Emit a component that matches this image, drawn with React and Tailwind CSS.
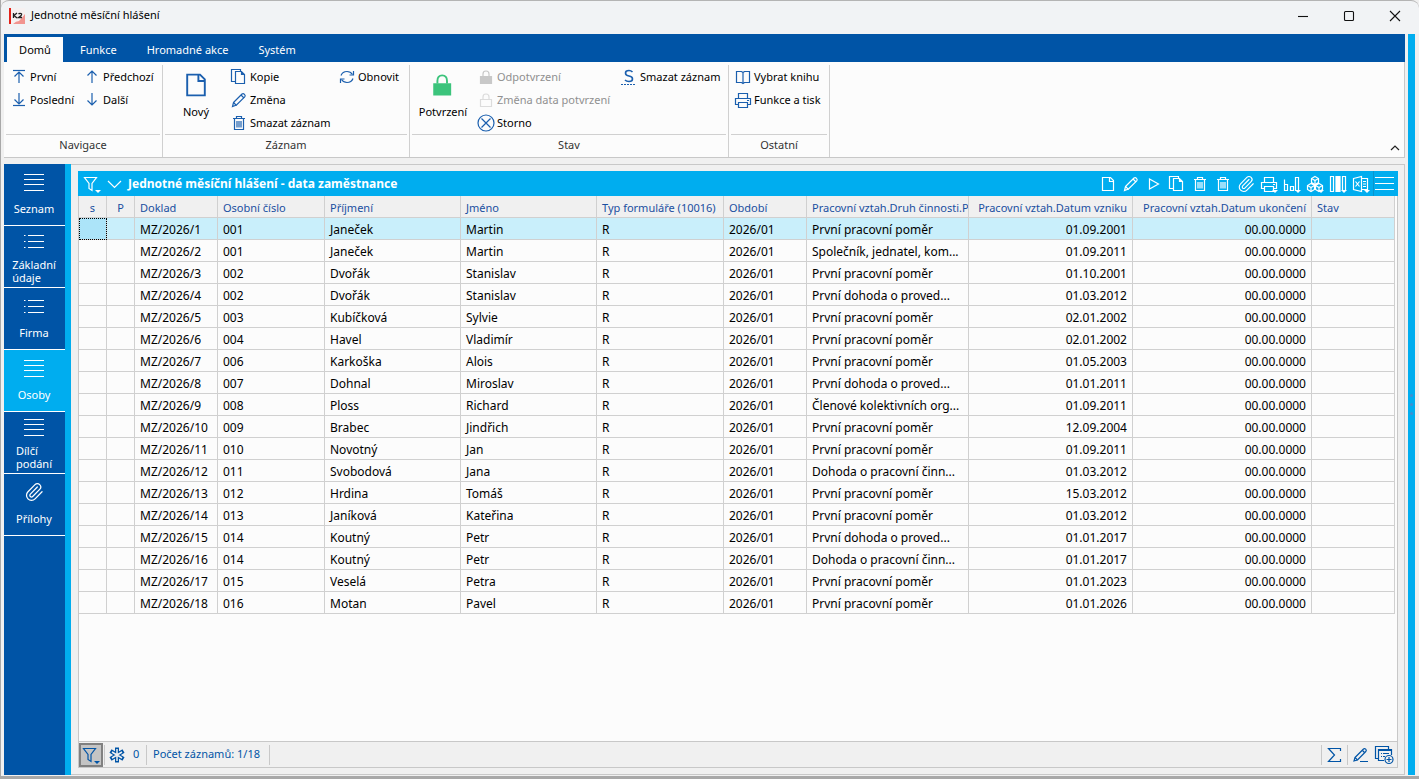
import { useState } from 'react';
import { Paperclip } from 'lucide-react';

const icons = {
  first: (
    <>
      <path d="M4 3.500h12" />
      <path d="M10 16V5M5.500 9.500L10 5l4.500 4.500" />
    </>
  ),
  last: (
    <>
      <path d="M4 15.500h12" />
      <path d="M10 3v11M5.500 9.500L10 14l4.500-4.500" />
    </>
  ),
  up: <path d="M10 16V4M5.500 8.500L10 4l4.500 4.500" />,
  down: <path d="M10 3v12M5.500 10.500L10 15l4.500-4.500" />,
  page: <path d="M4.500 3.500h8l3 3v10h-11zM11.500 3.500v4h4" />,
  copy: (
    <>
      <path d="M6.500 14.500h-4v-12h9v2" />
      <path d="M6.500 4.500h6l3 3v9h-9zM12.500 4.500v3h3" />
    </>
  ),
  pencil: (
    <>
      <path d="M4.500 12.500L13 4q1.200-1 2.500.3t.2 2.500L7.500 15 3.500 16.500z" />
      <path d="M12 5l3 3M4.500 12.500l3 3" />
    </>
  ),
  trash: (
    <>
      <path d="M5.500 5.500h9v11h-9zM4 5.500h12M7.500 5.500v-2h5v2" />
      <path d="M8 8v6.500M10 8v6.500M12 8v6.500" />
    </>
  ),
  refresh: (
    <>
      <path d="M4 8.500q1.500-4 6-4 3.500 0 5.500 3M16 11.500q-1.500 4-6 4-3.500 0-5.500-3" />
      <path d="M16.500 4v4h-4M3.500 16v-4h4" />
    </>
  ),
  lock: (
    <>
      <path d="M4.500 9.500h11v7h-11z" fill="currentColor" />
      <path d="M7 9V7q0-3 3-3t3 3v2" />
    </>
  ),
  lockOutline: (
    <>
      <path d="M4.500 9.500h11v7h-11z" />
      <path d="M7 9V7q0-3 3-3t3 3v2" />
    </>
  ),
  bigLock: (
    <>
      <path d="M4.500 9.500h10v6.500h-10z" fill="currentColor" />
      <path d="M6.500 9V7.500q0-3.500 3-3.500t3 3.500V9" />
    </>
  ),
  cancel: (
    <>
      <circle cx="10" cy="10" r="8" />
      <path d="M5.500 5.500l9 9M14.500 5.500l-9 9" />
    </>
  ),
  strike: (
    <>
      <path d="M13.500 5Q12 3.500 10 3.500 6.500 3.500 6.500 6t3.500 3 3.500 3-3.500 2.500Q7.500 14.500 6 13" strokeWidth="1.600" />
      <path d="M2 17.500h15" strokeDasharray="2 1" />
    </>
  ),
  book: <path d="M3.500 4.500h5l1.500 1 1.500-1h5v11h-5l-1.500 1-1.500-1h-5zM10 5.500v11" />,
  printer: (
    <>
      <path d="M5.500 8V3.500h9V8M5 14.500H2.500v-6h15v6H15" />
      <path d="M5.500 12.500h9v5h-9zM14 10.500h2" />
    </>
  ),
  play: <path d="M5.500 5l9 5-9 5z" />,
  chart: <path d="M2.500 5.500v11h3v-6h-3M8.500 12.500h3v4h-3zM13.500 3.500h3v13h-3z" />,
  cubes: (
    <>
      <path d="M10 2.500l3.500 2v4l-3.500 2-3.500-2v-4zM6 9.500l3.500 2v4L6 17.500l-3.500-2v-4zM14 9.500l3.500 2v4l-3.500 2-3.500-2v-4z" />
      <path d="M6.500 4.500l3.500 2 3.500-2M10 6.500v4M2.500 11.500l3.500 2 3.500-2M6 13.500v4M10.500 11.500l3.500 2 3.500-2M14 13.500v4" />
    </>
  ),
  columns: (
    <>
      <path d="M2.500 2.500h3v15h-3zM14.500 2.500h3v14h-3z" />
      <path d="M8 2.500h4v15H8z" fill="currentColor" />
    </>
  ),
  excel: (
    <>
      <path d="M10.500 4.500h6v11h-6M12 7.500h3M12 10h3M12 12.500h3" />
      <path d="M2.500 4.500l8-2v15l-8-2zM4.500 7.500l4 5M8.500 7.500l-4 5" />
    </>
  ),
  menu: <path d="M0 3.500h19M0 9.500h19M0 15.500h19" />,
  lines: <path d="M0 2.500h20M0 7.500h20M0 12.500h20M0 18.500h20" />,
  list: (
    <path d="M4 4.500h16M4 10.500h16M4 16.500h16M0 4.500h1.500M0 10.500h1.500M0 16.500h1.500" />
  ),
  filter: <path d="M2.500 3.500h12l-4.500 6v7l-3-2v-5z" />,
  chevron: <path d="M3 7l6.500 6.500L16 7" />,
  asterisk: (
    <>
      <path d="M10 2.500v15M3.500 6l13 8M16.500 6l-13 8" strokeWidth="4" />
      <path d="M10 4v12M5 7l10 6M15 7L5 13" stroke="#f0f0f0" strokeWidth="1.500" />
    </>
  ),
  sigma: <path d="M15.500 6V3.500h-12L9.500 10l-6 6.500h12V14" />,
  edit: (
    <>
      <path d="M4 12.500L12.500 4q1-1 2.200.2t.1 2.300L6.500 15 3 16z" />
      <path d="M11.500 5.500l2 2M4 12.500l2.500 2.500M9 16.500h8" />
    </>
  ),
  addTable: (
    <>
      <path d="M4 13.500H1.500v-12h13V4" />
      <path d="M10 15.500H4.500v-11h13V10M7 8.500h1M9 8.500h6M7 11.500h1M9 11.500h2M4.500 5.500h13" />
      <circle cx="15" cy="14.500" r="4" />
      <path d="M12.500 14.500h5M15 12v5" />
    </>
  ),
};

function Icon({ name, className = 'size-5', arrow }) {
  if (name === 'clip') {
    return <Paperclip className={`shrink-0 ${className}`} strokeWidth={1.5} aria-hidden="true" />;
  }
  return (
    <svg
      viewBox="0 0 20 20"
      className={`shrink-0 ${className}`}
      fill="none"
      stroke="currentColor"
      strokeWidth="1.200"
      aria-hidden="true"
    >
      {icons[name]}
      {arrow && <path d="M13 16h6l-3 3z" fill="currentColor" stroke="none" />}
    </svg>
  );
}

const sidebar = [
  { label: 'Seznam', icon: 'lines' },
  { label: 'Základní údaje', icon: 'list', tall: true },
  { label: 'Firma', icon: 'list' },
  { label: 'Osoby', icon: 'lines' },
  { label: 'Dílčí podání', icon: 'lines', tall: true },
  { label: 'Přílohy', icon: 'clip' },
];

const toolbar = [
  { icon: 'page', label: 'Nový' },
  { icon: 'pencil', label: 'Změna' },
  { icon: 'play', label: 'Spustit' },
  { icon: 'copy', label: 'Kopie' },
  { icon: 'trash', label: 'Smazat' },
  { icon: 'trash', label: 'Smazat vše' },
  { icon: 'clip', label: 'Přílohy' },
  { icon: 'printer', label: 'Tisk', arrow: true },
  { icon: 'chart', label: 'Graf', arrow: true },
  { icon: 'cubes', label: 'Kostka', arrow: true },
  { icon: 'columns', label: 'Sloupce', arrow: true },
  { icon: 'excel', label: 'Excel', arrow: true },
];

const columns = [
  { title: 's', width: 'w-7', center: true },
  { title: 'P', width: 'w-7', center: true },
  { title: 'Doklad', width: 'w-[83px]' },
  { title: 'Osobní číslo', width: 'w-[107px]' },
  { title: 'Příjmení', width: 'w-[136px]' },
  { title: 'Jméno', width: 'w-[136px]' },
  { title: 'Typ formuláře (10016)', width: 'w-[127px]' },
  { title: 'Období', width: 'w-[83px]' },
  { title: 'Pracovní vztah.Druh činnosti.P', width: 'w-[162px]' },
  { title: 'Pracovní vztah.Datum vzniku', width: 'w-[164px]', right: true },
  { title: 'Pracovní vztah.Datum ukončení', width: 'w-[179px]', right: true },
  { title: 'Stav', width: 'w-[83px]' },
];

const main = 'První pracovní poměr';
const dpp = 'První dohoda o proved...';
const dpc = 'Dohoda o pracovní činn...';

const people = [
  ['001', 'Janeček', 'Martin', main, '01.09.2001'],
  ['001', 'Janeček', 'Martin', 'Společník, jednatel, kom...', '01.09.2011'],
  ['002', 'Dvořák', 'Stanislav', main, '01.10.2001'],
  ['002', 'Dvořák', 'Stanislav', dpp, '01.03.2012'],
  ['003', 'Kubíčková', 'Sylvie', main, '02.01.2002'],
  ['004', 'Havel', 'Vladimír', main, '02.01.2002'],
  ['006', 'Karkoška', 'Alois', main, '01.05.2003'],
  ['007', 'Dohnal', 'Miroslav', dpp, '01.01.2011'],
  ['008', 'Ploss', 'Richard', 'Členové kolektivních org...', '01.09.2011'],
  ['009', 'Brabec', 'Jindřich', main, '12.09.2004'],
  ['010', 'Novotný', 'Jan', main, '01.09.2011'],
  ['011', 'Svobodová', 'Jana', dpc, '01.03.2012'],
  ['012', 'Hrdina', 'Tomáš', main, '15.03.2012'],
  ['013', 'Janíková', 'Kateřina', main, '01.03.2012'],
  ['014', 'Koutný', 'Petr', dpp, '01.01.2017'],
  ['014', 'Koutný', 'Petr', dpc, '01.01.2017'],
  ['015', 'Veselá', 'Petra', main, '01.01.2023'],
  ['016', 'Motan', 'Pavel', main, '01.01.2026'],
];

function TitleBar() {
  return (
    <header className="flex h-[34px] items-center rounded-t-lg border-t border-[#b4b4b4] bg-[#f1f3f5] pr-px pb-1 pl-2">
      <svg viewBox="0 0 16 16" className="size-4" aria-hidden="true">
        <path d="M0 0h16v16H0z" fill="#f6f1f1" />
        <path d="M0 0h2v16H0z" fill="#e2231a" />
        <path d="M16 6v10H4q3-3 6-3 3-3 6-7z" fill="#f2948f" />
        <path d="M4.500 5v5M8 5L5 7.500 8 10M9.500 6q1-1 2.500-.5T11.500 8L9.500 9.500H13" fill="none" stroke="#222" strokeWidth="1.300" />
      </svg>
      <h1 className="ml-[6px] text-[11px] text-black">Jednotné měsíční hlášení</h1>
      <div className="ml-auto flex">
        {[
          ['Minimalizovat', 'M5 10.500h10'],
          ['Maximalizovat', 'M6.500 5.500h7q1 0 1 1v7q0 1-1 1h-7q-1 0-1-1v-7q0-1 1-1z'],
          ['Zavřít', 'M5 5l10 10M15 5L5 15'],
        ].map(([label, d]) => (
          <button key={label} aria-label={label} className="flex h-7 w-[46px] items-center justify-center">
            <svg viewBox="0 0 20 20" className="size-5" fill="none" stroke="#111" strokeWidth="1.100">
              <path d={d} />
            </svg>
          </button>
        ))}
      </div>
    </header>
  );
}

function Group({ title, width, children }) {
  return (
    <section className={`flex h-[92px] flex-col border-r border-[#d0d0d0] ${width}`}>
      <div className="flex h-[69px]">{children}</div>
      <h2 className="mx-[2px] border-t border-[#d0d0d0] pt-[2px] text-center leading-4 text-[#333]">
        {title}
      </h2>
    </section>
  );
}

function RibbonButton({ icon, label, disabled, color = 'text-[#1b5fae]' }) {
  return (
    <button
      disabled={disabled}
      className="flex h-[23px] items-center gap-px whitespace-nowrap text-black disabled:text-[#909090]"
    >
      <Icon name={icon} className={`size-5 ${color}`} />
      {label}
    </button>
  );
}

function Ribbon() {
  return (
    <div className="border-r border-b border-[#c8c8c8] bg-[#fcfcfc] text-[11px] leading-4">
      <nav className="-mr-px flex h-7 items-end bg-[#0054a6] pl-[3px] text-white">
        <button className="mr-[2px] h-[25px] w-14 bg-[#fcfcfc] text-black">Domů</button>
        <button className="h-[25px] px-[15px]">Funkce</button>
        <button className="h-[25px] px-[15px]">Hromadné akce</button>
        <button className="h-[25px] px-[15px]">Systém</button>
      </nav>
      <div className="flex h-[95px] items-start pt-[3px]">
        <Group title="Navigace" width="w-[159px]">
          <div className="flex w-[73px] flex-col pl-[5px]">
            <RibbonButton icon="first" label="První" />
            <RibbonButton icon="last" label="Poslední" />
          </div>
          <div className="flex flex-col pl-[5px]">
            <RibbonButton icon="up" label="Předchozí" />
            <RibbonButton icon="down" label="Další" />
          </div>
        </Group>
        <Group title="Záznam" width="w-[247px]">
          <button className="flex h-14 w-[66px] flex-col items-center gap-[3px] pt-1 text-black">
            <Icon name="page" className="size-8 text-[#1b5fae]" />
            Nový
          </button>
          <div className="flex w-[108px] flex-col">
            <RibbonButton icon="copy" label="Kopie" />
            <RibbonButton icon="pencil" label="Změna" />
            <RibbonButton icon="trash" label="Smazat záznam" />
          </div>
          <RibbonButton icon="refresh" label="Obnovit" />
        </Group>
        <Group title="Stav" width="w-[319px]">
          <button className="flex h-14 w-[66px] flex-col items-center gap-[3px] pt-1 text-black">
            <Icon name="bigLock" className="size-8 text-[#3cc47c]" />
            Potvrzení
          </button>
          <div className="flex w-[143px] flex-col">
            <RibbonButton icon="lock" label="Odpotvrzení" color="text-[#c8c8c8]" disabled />
            <RibbonButton icon="lockOutline" label="Změna data potvrzení" color="text-[#dcdcdc]" disabled />
            <RibbonButton icon="cancel" label="Storno" />
          </div>
          <RibbonButton icon="strike" label="Smazat záznam" />
        </Group>
        <Group title="Ostatní" width="w-[101px]">
          <div className="flex flex-col pl-1">
            <RibbonButton icon="book" label="Vybrat knihu" />
            <RibbonButton icon="printer" label="Funkce a tisk" />
          </div>
        </Group>
        <button aria-label="Sbalit pás karet" className="mt-auto mr-[3px] mb-1 ml-auto">
          <svg viewBox="0 0 12 10" className="h-[10px] w-3" fill="none" stroke="#222" strokeWidth="1.200">
            <path d="M2 7l4-4 4 4" />
          </svg>
        </button>
      </div>
    </div>
  );
}

function Sidebar() {
  const [active, setActive] = useState('Osoby');

  return (
    <nav className="flex w-[67px] shrink-0 flex-col border-r-[6px] border-[#00adef] bg-[#0054a6]">
      {sidebar.map((item) => (
        <button
          key={item.label}
          onClick={() => setActive(item.label)}
          className={`flex h-[62px] flex-col items-center border-b border-white pr-px text-[11px] leading-[13px] text-white ${
            item.tall ? 'gap-[7px] pt-[5px]' : 'gap-[10px] pt-2'
          } ${active === item.label ? 'bg-[#00adef]' : ''}`}
        >
          <Icon name={item.icon} />
          <span className={item.tall ? 'w-min text-left' : ''}>{item.label}</span>
        </button>
      ))}
    </nav>
  );
}

function PanelHeader() {
  return (
    <div className="flex h-[25px] items-center bg-[#00adef] pl-1 text-white">
      <button aria-label="Filtr">
        <Icon name="filter" arrow />
      </button>
      <button aria-label="Rozbalit" className="ml-[3px]">
        <Icon name="chevron" />
      </button>
      <h2 className="ml-[3px] text-xs font-bold">Jednotné měsíční hlášení - data zaměstnance</h2>
      <div className="ml-auto flex items-center">
        {toolbar.map((tool) => (
          <button key={tool.label} aria-label={tool.label} className="flex w-[23px] justify-center">
            <Icon name={tool.icon} arrow={tool.arrow} className={tool.icon === 'clip' ? 'size-[18px]' : 'size-5'} />
          </button>
        ))}
        <button aria-label="Nabídka" className="ml-px flex h-[25px] w-[25px] items-center border-l border-[#0a94cc] pl-px">
          <Icon name="menu" />
        </button>
      </div>
    </div>
  );
}

function DataTable() {
  return (
    <table className="w-[1316px] table-fixed border-separate border-spacing-0 text-xs text-black">
      <thead>
        <tr className="bg-[#f0f0f0] text-[#1a4fa0]">
          {columns.map((col) => (
            <th
              key={col.title}
              className={`h-[22px] overflow-hidden border-r border-b border-[#d0d0d0] pt-[2px] pb-0 text-[11px] leading-4 font-normal whitespace-nowrap ${col.width} ${
                col.center ? 'px-0 text-center' : col.right ? 'pr-[5px] pl-0 text-right' : 'pr-0 pl-[5px] text-left'
              }`}
            >
              {col.title}
            </th>
          ))}
        </tr>
      </thead>
      <tbody>
        {people.map(([number, surname, name, relation, start], i) => {
          const cells = ['', '', `MZ/2026/${i + 1}`, number, surname, name, 'R', '2026/01', relation, start, '00.00.0000', ''];
          return (
            <tr key={i} className={i === 0 ? 'bg-[#c9effb]' : ''}>
              {cells.map((cell, j) => (
                <td
                  key={j}
                  className={`h-[22px] border-r border-b border-[#d0d0d0] pt-[2px] pr-[5px] pb-0 pl-[5px] leading-4 whitespace-nowrap ${
                    columns[j].right ? 'text-right' : ''
                  } ${i === 0 && j === 0 ? 'bg-[#ace4f9] outline-1 -outline-offset-1 outline-black outline-dotted' : ''}`}
                >
                  {cell}
                </td>
              ))}
            </tr>
          );
        })}
      </tbody>
    </table>
  );
}

function StatusBar() {
  return (
    <footer className="flex h-[26px] items-center border-t border-[#c8c8c8] bg-[#f0f0f0] text-[11px] text-[#0054a6]">
      <button aria-label="Filtr" className="flex h-6 w-6 items-center justify-center border-2 border-[#808080] bg-[#c4c4c4]">
        <Icon name="filter" arrow />
      </button>
      <span className="ml-px flex h-5 w-[43px] items-center gap-[6px] border-x border-[#c8c8c8] pl-[2px]">
        <Icon name="asterisk" />0
      </span>
      <span className="flex h-5 w-[123px] items-center border-r border-[#c8c8c8] pl-[6px]">Počet záznamů: 1/18</span>
      <button aria-label="Součet" className="ml-auto flex h-5 w-[27px] items-center justify-center border-x border-[#c8c8c8]">
        <Icon name="sigma" />
      </button>
      <button aria-label="Upravit" className="ml-[3px]">
        <Icon name="edit" />
      </button>
      <button aria-label="Přidat tabulku" className="mr-[3px] ml-[3px]">
        <Icon name="addTable" />
      </button>
    </footer>
  );
}

export default function App() {
  return (
    <div className="flex min-h-screen flex-col border-b-[3px] border-l border-[#a8a8a8] bg-[#f0f0f0] font-['Noto_Sans','Open_Sans',sans-serif]">
      <TitleBar />
      <div className="flex grow pr-1 pb-px pl-[3px]">
        <div className="flex min-w-0 grow flex-col">
          <Ribbon />
          <div className="mt-[6px] flex grow">
            <Sidebar />
            <main className="flex min-w-0 grow flex-col border-t border-r border-b border-[#c8c8c8] p-[6px] pl-[7px]">
              <PanelHeader />
              <div className="flex grow flex-col border-x border-b border-[#c8c8c8] bg-[#fcfcfc]">
                <div className="grow overflow-hidden">
                  <DataTable />
                </div>
                <StatusBar />
              </div>
            </main>
          </div>
        </div>
        <div className="ml-[3px] flex w-[7px] flex-col items-center justify-center gap-[6px] bg-[#00adef]">
          <i className="size-[3px] rounded-full bg-[#3f8fd0]" />
          <i className="size-[3px] rounded-full bg-[#3f8fd0]" />
          <i className="size-[3px] rounded-full bg-[#3f8fd0]" />
        </div>
      </div>
    </div>
  );
}
